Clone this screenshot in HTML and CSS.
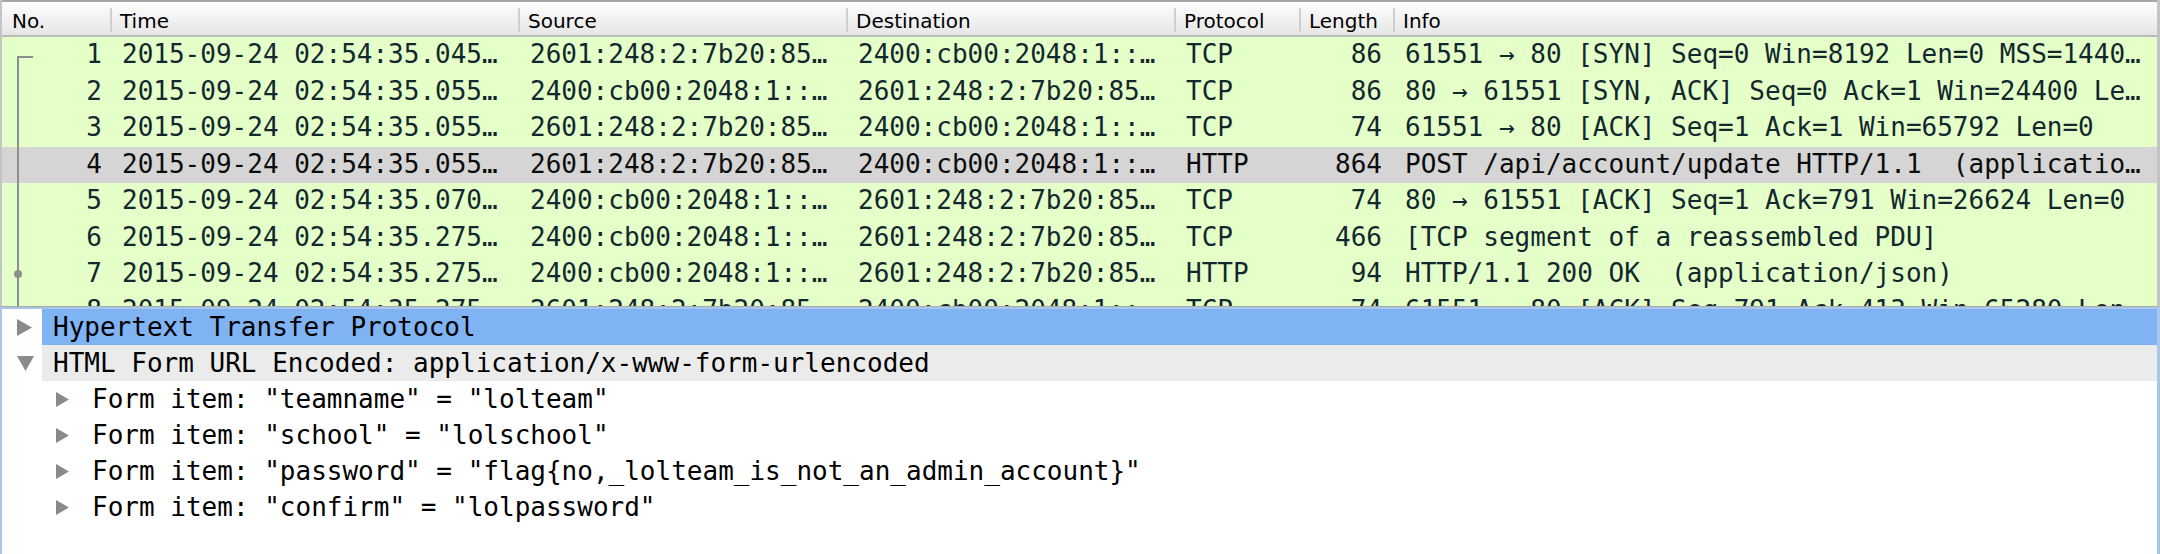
FILE: index.html
```html
<!DOCTYPE html>
<html>
<head>
<meta charset="utf-8">
<link rel="stylesheet" href="styles.css">
</head>
<body>
<div class="packets">
  <div class="hdr">
    <div class="hc first"><span class="hl">No.</span></div>
    <div class="hc"><span class="hl">Time</span></div>
    <div class="hc"><span class="hl">Source</span></div>
    <div class="hc"><span class="hl">Destination</span></div>
    <div class="hc"><span class="hl">Protocol</span></div>
    <div class="hc"><span class="hl">Length</span></div>
    <div class="hc"><span class="hl">Info</span></div>
  </div>
  <div class="row">
    <div class="c no rel-start">1</div><div class="c">2015-09-24 02:54:35.045…</div><div class="c">2601:248:2:7b20:85…</div><div class="c">2400:cb00:2048:1::…</div><div class="c">TCP</div><div class="c len">86</div><div class="c">61551 → 80 [SYN] Seq=0 Win=8192 Len=0 MSS=1440…</div>
  </div>
  <div class="row">
    <div class="c no rel-mid">2</div><div class="c">2015-09-24 02:54:35.055…</div><div class="c">2400:cb00:2048:1::…</div><div class="c">2601:248:2:7b20:85…</div><div class="c">TCP</div><div class="c len">86</div><div class="c">80 → 61551 [SYN, ACK] Seq=0 Ack=1 Win=24400 Le…</div>
  </div>
  <div class="row">
    <div class="c no rel-mid">3</div><div class="c">2015-09-24 02:54:35.055…</div><div class="c">2601:248:2:7b20:85…</div><div class="c">2400:cb00:2048:1::…</div><div class="c">TCP</div><div class="c len">74</div><div class="c">61551 → 80 [ACK] Seq=1 Ack=1 Win=65792 Len=0</div>
  </div>
  <div class="row sel">
    <div class="c no rel-mid">4</div><div class="c">2015-09-24 02:54:35.055…</div><div class="c">2601:248:2:7b20:85…</div><div class="c">2400:cb00:2048:1::…</div><div class="c">HTTP</div><div class="c len">864</div><div class="c">POST /api/account/update HTTP/1.1  (applicatio…</div>
  </div>
  <div class="row">
    <div class="c no rel-mid">5</div><div class="c">2015-09-24 02:54:35.070…</div><div class="c">2400:cb00:2048:1::…</div><div class="c">2601:248:2:7b20:85…</div><div class="c">TCP</div><div class="c len">74</div><div class="c">80 → 61551 [ACK] Seq=1 Ack=791 Win=26624 Len=0</div>
  </div>
  <div class="row">
    <div class="c no rel-mid">6</div><div class="c">2015-09-24 02:54:35.275…</div><div class="c">2400:cb00:2048:1::…</div><div class="c">2601:248:2:7b20:85…</div><div class="c">TCP</div><div class="c len">466</div><div class="c">[TCP segment of a reassembled PDU]</div>
  </div>
  <div class="row">
    <div class="c no rel-mid rel-dot">7</div><div class="c">2015-09-24 02:54:35.275…</div><div class="c">2400:cb00:2048:1::…</div><div class="c">2601:248:2:7b20:85…</div><div class="c">HTTP</div><div class="c len">94</div><div class="c">HTTP/1.1 200 OK  (application/json)</div>
  </div>
  <div class="row">
    <div class="c no rel-mid">8</div><div class="c">2015-09-24 02:54:35.275…</div><div class="c">2601:248:2:7b20:85…</div><div class="c">2400:cb00:2048:1::…</div><div class="c">TCP</div><div class="c len">74</div><div class="c">61551 → 80 [ACK] Seq=791 Ack=413 Win=65280 Len…</div>
  </div>
</div>
<div class="details">
  <div class="node">
    <span class="twisty"><svg width="15" height="17" viewBox="0 0 15 17"><polygon points="0,0 15,8.5 0,17" fill="#8a8a8a"/></svg></span>
    <span class="label hi">Hypertext Transfer Protocol</span>
  </div>
  <div class="node">
    <span class="twisty"><svg width="17" height="15" viewBox="0 0 17 15"><polygon points="0,0 17,0 8.5,15" fill="#8a8a8a"/></svg></span>
    <span class="label open">HTML Form URL Encoded: application/x-www-form-urlencoded</span>
  </div>
  <div class="node child">
    <span class="twisty"><svg width="13" height="15" viewBox="0 0 13 15"><polygon points="0,0 13,7.5 0,15" fill="#8a8a8a"/></svg></span>
    <span class="label">Form item: "teamname" = "lolteam"</span>
  </div>
  <div class="node child">
    <span class="twisty"><svg width="13" height="15" viewBox="0 0 13 15"><polygon points="0,0 13,7.5 0,15" fill="#8a8a8a"/></svg></span>
    <span class="label">Form item: "school" = "lolschool"</span>
  </div>
  <div class="node child">
    <span class="twisty"><svg width="13" height="15" viewBox="0 0 13 15"><polygon points="0,0 13,7.5 0,15" fill="#8a8a8a"/></svg></span>
    <span class="label">Form item: "password" = "flag{no,_lolteam_is_not_an_admin_account}"</span>
  </div>
  <div class="node child">
    <span class="twisty"><svg width="13" height="15" viewBox="0 0 13 15"><polygon points="0,0 13,7.5 0,15" fill="#8a8a8a"/></svg></span>
    <span class="label">Form item: "confirm" = "lolpassword"</span>
  </div>
</div>
</body>
</html>
```
FILE: styles.css
```css
html, body {
  margin: 0;
  padding: 0;
  background: #ffffff;
}
body {
  width: 2160px;
  height: 554px;
  overflow: hidden;
}
.packets {
  height: 307px;
  box-sizing: border-box;
  border-left: 2px solid #c4c4c4;
  border-right: 3px solid #c4c4c4;
  border-bottom: 1px solid #a9a9a9;
  overflow: hidden;
  background: #e4ffc7;
}
.hdr, .row {
  display: grid;
  grid-template-columns: 108px 408px 328px 328px 125px 94px 1fr;
}
.hdr {
  height: 33px;
  border-top: 2px solid #a6a6a6;
  border-bottom: 2px solid #bababa;
  background: linear-gradient(#ffffff, #f4f4f4 40%, #e6e6e6);
  font-family: "DejaVu Sans", sans-serif;
  font-size: 20px;
  color: #000;
}
.hc {
  display: flex;
  padding: 6px 0 3px;
  box-sizing: border-box;
  height: 33px;
}
.hl {
  display: flex;
  align-items: center;
  flex: 1;
  border-left: 2px solid #cfcfcf;
  padding-left: 8px;
  padding-top: 1px;
  white-space: nowrap;
  overflow: hidden;
}
.hc.first .hl {
  border-left: none;
  padding-left: 10px;
}
.row {
  height: 36.5px;
  line-height: 36.5px;
  font-family: "DejaVu Sans Mono", monospace;
  font-size: 26px;
  color: #12272e;
  background: #e4ffc7;
}
.row.sel {
  background: #d5d5d5;
  color: #0c0c0c;
}
.c {
  padding: 0 11px 0 12px;
  white-space: pre;
  overflow: hidden;
  box-sizing: border-box;
  padding-bottom: 2px;
  line-height: 34.5px;
}
.c.no, .c.len {
  text-align: right;
  padding-left: 0;
}
.c.no {
  padding-right: 8px;
  position: relative;
}
.rel-start::before {
  content: "";
  position: absolute;
  left: 15px;
  top: calc(50% + 1px);
  bottom: 0;
  width: 14px;
  border-top: 2px solid #8e8e8e;
  border-left: 2px solid #8e8e8e;
}
.rel-mid::before {
  content: "";
  position: absolute;
  left: 15px;
  top: 0;
  bottom: 0;
  border-left: 2px solid #8e8e8e;
}
.rel-dot::after {
  content: "";
  position: absolute;
  left: 12px;
  top: calc(50% - 4px);
  width: 8px;
  height: 8px;
  border-radius: 50%;
  background: #8e8e8e;
}
.details {
  height: 247px;
  box-sizing: border-box;
  border: 2px solid #a9c5e8;
  border-bottom: none;
  border-right-width: 3px;
  font-family: "DejaVu Sans Mono", monospace;
  font-size: 26px;
  color: #000;
  background: #ffffff;
}
.node {
  display: flex;
  height: 36px;
}
.twisty {
  width: 40px;
  flex: 0 0 40px;
  display: flex;
  align-items: center;
  padding-left: 15px;
  box-sizing: border-box;
}
.child .twisty {
  margin-left: 39px;
  padding-left: 15px;
}
.label {
  flex: 1;
  line-height: 36px;
  padding-left: 11px;
  white-space: pre;
}
.label.hi {
  background: #7fb3f3;
}
.label.open {
  background: #ebebeb;
}
```
